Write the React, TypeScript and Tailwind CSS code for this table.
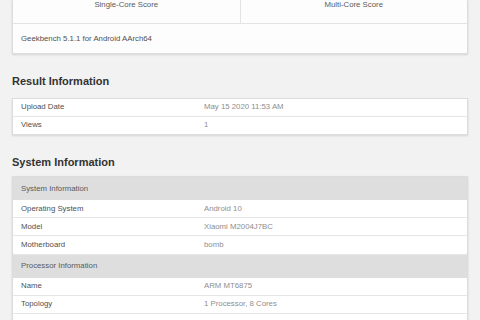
import React from "react";

type Row = { label: string; value: string };

const resultRows: Row[] = [
  { label: "Upload Date", value: "May 15 2020 11:53 AM" },
  { label: "Views", value: "1" },
];

const systemRows: Row[] = [
  { label: "Operating System", value: "Android 10" },
  { label: "Model", value: "Xiaomi M2004J7BC" },
  { label: "Motherboard", value: "bomb" },
];

const processorRows: Row[] = [
  { label: "Name", value: "ARM MT6875" },
  { label: "Topology", value: "1 Processor, 8 Cores" },
  { label: "Identifier", value: "ARM implementer 65 architecture 8 variant 1 part 3333 revision 0" },
];

function InfoRow({ row, height }: { row: Row; height: string }) {
  return (
    <div className={`flex items-center border-b border-[#e6e6e6] bg-white ${height}`}>
      <div className="w-[191px] shrink-0 pl-2 text-[#505050]">{row.label}</div>
      <div className="truncate text-[#8e8e8e]">{row.value}</div>
    </div>
  );
}

function GroupHeader({ title }: { title: string }) {
  return (
    <div className="flex h-[23px] items-center bg-[#dedede] pl-2 text-[#5a5a5a]">{title}</div>
  );
}

export default function App() {
  return (
    <div
      className="h-[320px] w-[480px] overflow-hidden bg-[#f2f2f2] px-3 text-[7.8px] leading-[10px]"
      style={{ fontFamily: '"Liberation Sans", Arial, sans-serif' }}
    >
      {/* Benchmark summary card */}
      <div className="border-x border-b border-[#dcdcdc] bg-[#fdfdfd] shadow-[0_1px_2px_rgba(0,0,0,0.12)]">
        <div className="flex h-[24px] border-b border-[#e3e3e3]">
          <div className="flex-1 border-r border-[#e3e3e3] text-center text-[#5a5a5a]">Single-Core Score</div>
          <div className="flex-1 text-center text-[#5a5a5a]">Multi-Core Score</div>
        </div>
        <div className="flex h-[29px] items-center pl-2 text-[#505050]">Geekbench 5.1.1 for Android AArch64</div>
      </div>

      <h2 className="mt-[20px] text-[11px] font-bold leading-[14px] text-[#333]">Result Information</h2>
      <div className="mt-[10px] border border-[#dcdcdc] bg-white shadow-[0_1px_2px_rgba(0,0,0,0.12)] [&>*:last-child]:border-b-0">
        {resultRows.map((r) => (
          <InfoRow key={r.label} row={r} height="h-[17.5px]" />
        ))}
      </div>

      <h2 className="mt-[20px] text-[11px] font-bold leading-[14px] text-[#333]">System Information</h2>
      <div className="mt-[7px] border border-[#dcdcdc] bg-white shadow-[0_1px_2px_rgba(0,0,0,0.12)]">
        <GroupHeader title="System Information" />
        {systemRows.map((r) => (
          <InfoRow key={r.label} row={r} height="h-[18.2px]" />
        ))}
        <GroupHeader title="Processor Information" />
        {processorRows.map((r) => (
          <InfoRow key={r.label} row={r} height="h-[18.2px]" />
        ))}
      </div>
    </div>
  );
}
